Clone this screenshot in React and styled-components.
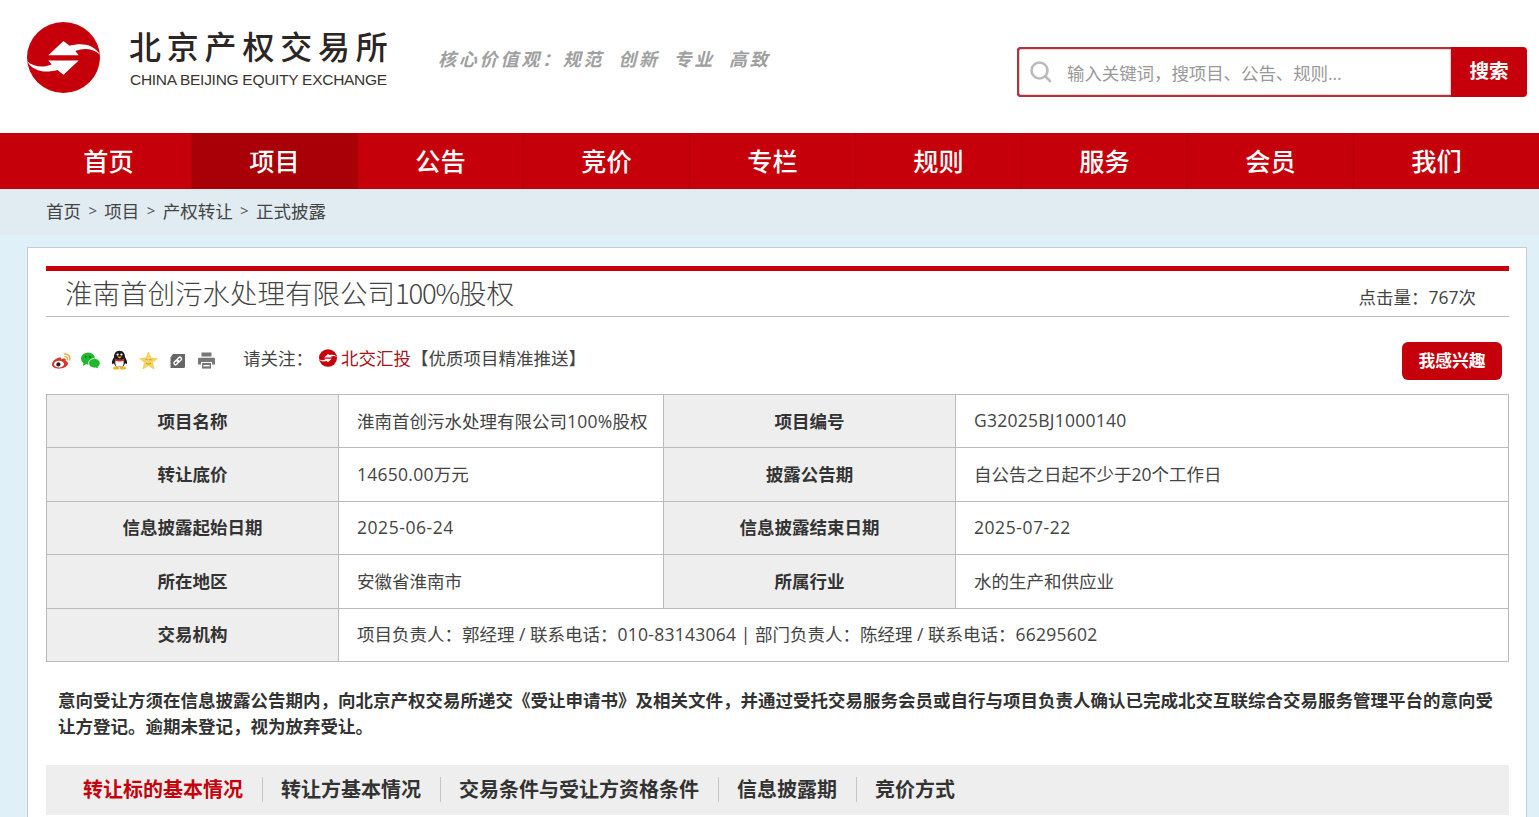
import React from "react";
import styled, { createGlobalStyle } from "styled-components";

const Global = createGlobalStyle`
  html, body { margin: 0; padding: 0; height: 817px; overflow: hidden; background: #dff0f8; }
  body { font-family: "Open Sans", "Noto Sans CJK SC", "Liberation Sans", sans-serif; color: #333; }
  * { box-sizing: border-box; }
`;

const RED = "#c6000b";

const Page = styled.div`width: 1539px; height: 817px; overflow: hidden;`;

const Header = styled.header`
  height: 133px; background: #fff; display: flex; align-items: flex-start; padding-left: 27px;
`;
const LogoWrap = styled.div`display: flex; align-items: flex-start; padding-top: 22px; width: 411px;`;
const LogoText = styled.div`margin-left: 29px; margin-top: 3px;`;
const LogoCn = styled.div`
  font-family: "Noto Sans CJK SC", sans-serif; font-size: 32px; line-height: 40px; letter-spacing: 5.8px; color: #2b2523; font-weight: 500; white-space: nowrap;
`;
const LogoEn = styled.div`
  font-family: "Liberation Sans", sans-serif; font-size: 15.5px; line-height: 18px; margin-top: 6px; margin-left: 1px; color: #3a3431; letter-spacing: -0.28px; white-space: nowrap;
`;
const Slogan = styled.div`
  margin-top: 45px; width: 579px; flex: none; font-family: "Noto Sans CJK SC", sans-serif; font-size: 18px; line-height: 26px; font-weight: 700; font-style: italic; color: #a0a0a0;
  letter-spacing: 2.8px; white-space: pre;
`;
const Search = styled.div`
  width: 510px; height: 50px; margin-top: 47px; display: flex; flex: none;
  border-radius: 4px; background: ${RED};
`;
const SearchField = styled.div`
  flex: 1; display: flex; align-items: center; background: #fff; border: 2px solid #a53a3e; border-right: none;
  border-radius: 4px 0 0 4px; box-shadow: inset 0 0 0 1px #f4c9cb; padding-left: 10px;
`;
const Placeholder = styled.span`
  margin-left: 14px; font-size: 17.5px; color: #999; white-space: nowrap; letter-spacing: -0.1px;
`;
const SearchBtn = styled.div`
  width: 76px; display: flex; align-items: center; justify-content: center; color: #fff; font-weight: 700; font-size: 19.6px; padding-bottom: 5px;
`;

const Nav = styled.nav`height: 56px; background: ${RED}; display: flex; padding-left: 26px;`;
const NavItem = styled.a`
  width: 166px; display: flex; align-items: center; justify-content: center; color: #fff; font-size: 25.2px; font-weight: 500; padding-bottom: 2px;
  background: ${p => (p.$active ? "#a90008" : "transparent")};
  border-right: 1px solid ${p => (p.$last ? "transparent" : p.$active ? "#a90008" : "#b60009")};
`;

const Crumbs = styled.div`
  height: 46px; background: #e1ebf2; padding: 0 0 4px 46px; display: flex; align-items: center; font-size: 17.5px; color: #444; white-space: nowrap;
`;
const Sep = styled.span`margin: 0 7.4px; font-size: 15px; color: #555;`;

const Body = styled.main`padding: 12px 12px 0 27px;`;
const Card = styled.section`
  background: #fff; border: 1px solid #c4cdd2; padding: 18px 17px 0 18px; height: 620px;
`;
const TitleRow = styled.div`
  border-top: 5px solid ${RED}; height: 51px; border-bottom: 1px solid #bbb; display: flex; justify-content: space-between; align-items: flex-start; padding: 0 33px 0 19px;
`;
const Title = styled.h1`
  margin: 0; font-family: "Noto Sans CJK SC", sans-serif; font-size: 27.5px; line-height: 42px; font-weight: 300; color: #444; white-space: nowrap;
`;
const TitleNum = styled.span`letter-spacing: -1.2px;`;
const Hits = styled.div`font-size: 17.5px; line-height: 26px; margin-top: 13px; color: #444;`;

const ActionRow = styled.div`
  height: 77px; display: flex; align-items: flex-start;
`;
const Share = styled.div`display: flex; align-items: center; gap: 8px; margin: 33px 0 0 5px; width: 192px;`;
const IconBox = styled.span`width: 21px; height: 21px; display: block; flex: none;`;
const Follow = styled.div`
  margin-top: 28px; font-size: 17.5px; line-height: 26px; color: #444; display: flex; align-items: center; white-space: nowrap;
`;
const FollowLabel = styled.span`margin-right: 6px;`;
const FollowLink = styled.a`color: #a3141c; margin-left: 4px;`;
const FollowNote = styled.span``;
const Interest = styled.button`
  margin: 25px 7px 0 auto; width: 100px; height: 38px; border: none; border-radius: 6px; background: ${RED}; color: #fff;
  font-family: inherit; font-size: 16.8px; font-weight: 700; padding: 0 0 2px;
`;

const Table = styled.table`
  width: 1462px; border-collapse: collapse; table-layout: fixed; font-size: 17.5px; color: #444;
`;
const Tr = styled.tr`height: 53.4px;`;
const Th = styled.th`
  border: 1px solid #bbb; background: #eee; font-weight: 700; text-align: center; color: #333; padding: 0 0 2px;
`;
const Td = styled.td`
  border: 1px solid #bbb; padding: 0 0 2px 18px; white-space: nowrap;
`;
const Num = styled.span`letter-spacing: ${p => p.$tight ? "0.25px" : "0.55px"};`;

const Notice = styled.p`
  margin: 25px 0 0; padding: 0 12px; font-size: 17.5px; line-height: 26px; font-weight: 700; color: #333;
`;
const Tabs = styled.div`
  margin-top: 26px; height: 50px; background: #eee; display: flex; align-items: center; padding-left: 19px; font-size: 20px; font-weight: 700; color: #333;
`;
const Tab = styled.a`
  padding: 0 19px 0 18px; line-height: 25px; white-space: nowrap;
  color: ${p => (p.$active ? RED : "#333")};
  border-right: 1px solid ${p => (p.$last ? "transparent" : "#c4c4c4")};
`;

const Swoosh = () => (
  <>
    <path d="M130 78 L85 120 L175 120 L165 108 C190 98 215 100 238 118 C220 88 185 82 148 92 Z" fill="#fff" />
    <path d="M130 178 L175 136 L85 136 L95 148 C70 158 45 156 22 138 C40 168 75 174 112 164 Z" fill="#fff" />
  </>
);

const Logo = () => (
  <svg width="73" height="71" viewBox="22 22 216 210" style={{ flex: "none" }}>
    <ellipse cx="130" cy="127" rx="108" ry="105" fill={RED} />
    <Swoosh />
  </svg>
);

const MiniLogo = () => (
  <svg width="18" height="18" viewBox="22 22 216 210">
    <ellipse cx="130" cy="127" rx="108" ry="105" fill={RED} />
    <Swoosh />
  </svg>
);

const SearchIcon = () => (
  <svg width="24" height="24" viewBox="0 0 24 24" fill="none" stroke="#bbb" strokeWidth="2.6" strokeLinecap="round">
    <circle cx="10.5" cy="10.5" r="8" />
    <path d="M16.5 16.5 L21 21" />
  </svg>
);

const Weibo = () => (
  <svg viewBox="0 0 21 21" width="21" height="21">
    <path d="M9 7.5 C4.5 8 1 11.5 1 14.5 C1 17.5 5 19 9 18.6 C13.5 18.2 17 16 17 13.5 C17 12 15.6 11.4 14.6 11 C15.2 9.6 14.6 8.6 13.2 8.6 C12 8.6 11 9.2 10.2 9.4 C10.4 8 10.2 7.4 9 7.5 Z" fill="#d8352b" />
    <ellipse cx="8" cy="14.2" rx="5" ry="3.4" fill="#fff" />
    <circle cx="7.4" cy="14.4" r="2.1" fill="#222" />
    <path d="M13.5 4 C17 3.6 19.6 6.4 18.8 10" fill="none" stroke="#f0a33a" strokeWidth="1.5" strokeLinecap="round" />
    <path d="M13.8 6.6 C15.6 6.4 16.8 7.8 16.4 9.6" fill="none" stroke="#f0a33a" strokeWidth="1.3" strokeLinecap="round" />
  </svg>
);
const Wechat = () => (
  <svg viewBox="0 0 21 21" width="21" height="21">
    <ellipse cx="8" cy="8.6" rx="7" ry="6" fill="#22b52e" />
    <path d="M3.6 12 L3 16 L7 13.6 Z" fill="#22b52e" />
    <ellipse cx="14.4" cy="13.2" rx="5.8" ry="4.8" fill="#22b52e" stroke="#fff" strokeWidth=".8" />
    <path d="M17.4 16 L18.2 18.6 L15 17 Z" fill="#22b52e" />
    <circle cx="5.8" cy="7" r=".9" fill="#0f6e1d" /><circle cx="10" cy="7" r=".9" fill="#0f6e1d" />
  </svg>
);
const Qq = () => (
  <svg viewBox="0 0 21 21" width="21" height="21">
    <path d="M10.5 0.8 C6.4 0.8 5 4 5 7.2 C3.2 9.8 2.2 12.8 3.4 14.2 L5 13.2 C5.5 14.6 6.2 15.8 7.2 16.4 L11 16.7 L13.8 16.4 C14.8 15.8 15.5 14.6 16 13.2 L17.6 14.2 C18.8 12.8 17.8 9.8 16 7.2 C16 4 14.6 0.8 10.5 0.8 Z" fill="#1b1b1b" />
    <path d="M6.6 10 C9 11 12 11 14.4 10 C15 12 14.8 15 13.2 16.6 L7.8 16.6 C6.2 15 6 12 6.6 10 Z" fill="#fff" />
    <path d="M5.8 8.4 C9 10 12 10 15.2 8.4 L15.2 10.6 C12 11.8 9 11.8 5.8 10.6 Z" fill="#d9281e" />
    <path d="M8 6.6 L13 6.6 L10.5 8.6 Z" fill="#f2b01e" />
    <ellipse cx="7.2" cy="18" rx="3.2" ry="1.6" fill="#f2b01e" /><ellipse cx="13.8" cy="18" rx="3.2" ry="1.6" fill="#f2b01e" />
    <circle cx="8.6" cy="4.6" r="1.1" fill="#fff" /><circle cx="12.4" cy="4.6" r="1.1" fill="#fff" />
  </svg>
);
const Star = () => (
  <svg viewBox="0 0 21 21" width="21" height="21">
    <path d="M10.5 2 L13 8 L19.4 8.5 L14.5 12.6 L16.1 19 L10.5 15.6 L4.9 19 L6.5 12.6 L1.6 8.5 L8 8 Z" fill="#f6d466" stroke="#f2c23a" strokeWidth=".6" />
    <path d="M7.5 10 C8.4 9.2 9.2 9.2 9.8 10 M11.4 10 C12 9.2 12.8 9.2 13.6 10 M8 13 C9.5 14.4 11.6 14.4 13 13" fill="none" stroke="#c98a10" strokeWidth=".9" />
  </svg>
);
const LinkIco = () => (
  <svg viewBox="0 0 21 21" width="21" height="21">
    <path d="M6 4 L18 4 L18 16.5 Q18 18 16.5 18 L3.5 18 L3.5 7.5 Z" fill="#666" />
    <g fill="none" stroke="#fff" strokeWidth="1.4" strokeLinecap="round" transform="rotate(-45 10.7 11)">
      <rect x="6" y="9.4" width="5.4" height="3.2" rx="1.6" />
      <rect x="10" y="9.4" width="5.4" height="3.2" rx="1.6" />
    </g>
  </svg>
);
const Printer = () => (
  <svg viewBox="0 0 21 21" width="21" height="21">
    <rect x="5.5" y="2.5" width="10" height="4" fill="#777" />
    <path d="M3 7.8 H18 Q19 7.8 19 9 V14.5 H16 V12 H5 V14.5 H2 V9 Q2 7.8 3 7.8 Z" fill="#777" />
    <rect x="6" y="13" width="9" height="5.6" fill="#777" />
    <rect x="7.4" y="15" width="6.2" height="1.4" fill="#fff" />
  </svg>
);

const navItems = ["首页", "项目", "公告", "竞价", "专栏", "规则", "服务", "会员", "我们"];
const tabs = ["转让标的基本情况", "转让方基本情况", "交易条件与受让方资格条件", "信息披露期", "竞价方式"];
const shareIcons = [Weibo, Wechat, Qq, Star, LinkIco, Printer];

const rows = [
  ["项目名称", <>淮南首创污水处理有限公司<Num $tight>100%</Num>股权</>, "项目编号", <Num $tight>G32025BJ1000140</Num>],
  ["转让底价", <><Num $tight>14650.00</Num>万元</>, "披露公告期", "自公告之日起不少于20个工作日"],
  ["信息披露起始日期", <Num>2025-06-24</Num>, "信息披露结束日期", <Num>2025-07-22</Num>],
  ["所在地区", "安徽省淮南市", "所属行业", "水的生产和供应业"],
];

export default function App() {
  return (
    <Page>
      <Global />
      <Header>
        <LogoWrap>
          <Logo />
          <LogoText>
            <LogoCn>北京产权交易所</LogoCn>
            <LogoEn>CHINA BEIJING EQUITY EXCHANGE</LogoEn>
          </LogoText>
        </LogoWrap>
        <Slogan>核心价值观：规范  创新  专业  高致</Slogan>
        <Search>
          <SearchField>
            <SearchIcon />
            <Placeholder>输入关键词，搜项目、公告、规则...</Placeholder>
          </SearchField>
          <SearchBtn>搜索</SearchBtn>
        </Search>
      </Header>
      <Nav>
        {navItems.map((n, i) => (
          <NavItem key={n} $active={i === 1} $last={i === 8}>{n}</NavItem>
        ))}
      </Nav>
      <Crumbs>
        首页<Sep>&gt;</Sep>项目<Sep>&gt;</Sep>产权转让<Sep>&gt;</Sep>正式披露
      </Crumbs>
      <Body>
        <Card>
          <TitleRow>
            <Title>淮南首创污水处理有限公司<TitleNum>100%</TitleNum>股权</Title>
            <Hits>点击量：767次</Hits>
          </TitleRow>
          <ActionRow>
            <Share>
              {shareIcons.map((Ico, i) => (
                <IconBox key={i}><Ico /></IconBox>
              ))}
            </Share>
            <Follow>
              <FollowLabel>请关注：</FollowLabel>
              <MiniLogo />
              <FollowLink>北交汇投</FollowLink>
              <FollowNote>【优质项目精准推送】</FollowNote>
            </Follow>
            <Interest>我感兴趣</Interest>
          </ActionRow>
          <Table>
            <colgroup>
              <col style={{ width: 292 }} />
              <col style={{ width: 325 }} />
              <col style={{ width: 292 }} />
              <col style={{ width: 553 }} />
            </colgroup>
            <tbody>
              {rows.map(r => (
                <Tr key={r[0]}>
                  <Th>{r[0]}</Th>
                  <Td>{r[1]}</Td>
                  <Th>{r[2]}</Th>
                  <Td>{r[3]}</Td>
                </Tr>
              ))}
              <Tr>
                <Th>交易机构</Th>
                <Td colSpan={3}>项目负责人：郭经理 / 联系电话：<Num $tight>010-83143064</Num> | 部门负责人：陈经理 / 联系电话：<Num $tight>66295602</Num></Td>
              </Tr>
            </tbody>
          </Table>
          <Notice>意向受让方须在信息披露公告期内，向北京产权交易所递交《受让申请书》及相关文件，并通过受托交易服务会员或自行与项目负责人确认已完成北交互联综合交易服务管理平台的意向受让方登记。逾期未登记，视为放弃受让。</Notice>
          <Tabs>
            {tabs.map((t, i) => (
              <Tab key={t} $active={i === 0} $last={i === tabs.length - 1}>{t}</Tab>
            ))}
          </Tabs>
        </Card>
      </Body>
    </Page>
  );
}
